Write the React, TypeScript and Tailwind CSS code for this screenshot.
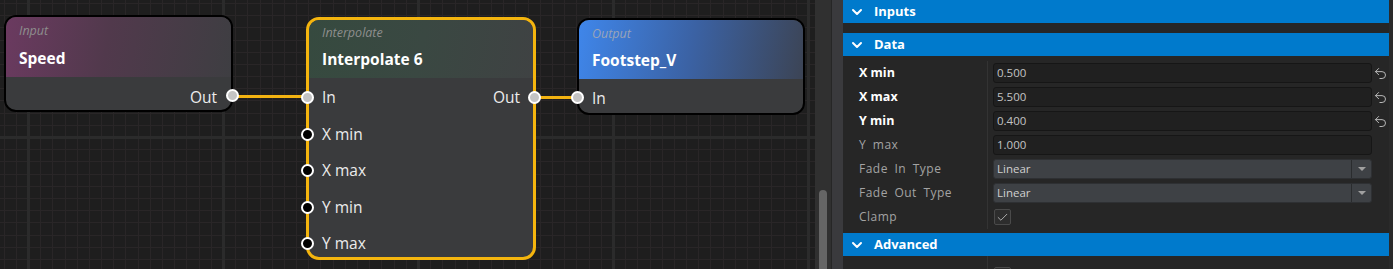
import React from 'react';
import { ChevronDown, Undo2, Check } from 'lucide-react';

const W = 815;
const H = 269;
const minor = 195 / 16;

function Grid() {
  const vx: number[] = [];
  for (let x = 3.6; x < W; x += minor) vx.push(Math.round(x));
  const hy: number[] = [];
  for (let y = 137 - minor * 11; y < H; y += minor) hy.push(Math.round(y));
  return (
    <svg className="absolute inset-0" width={W} height={H} shapeRendering="crispEdges">
      {vx.map((x) => (
        <rect key={'v' + x} x={x} y={0} width={1} height={H} fill="#292627" />
      ))}
      {hy.map((y) => (
        <rect key={'h' + y} x={0} y={y} width={W} height={1} fill="#292627" />
      ))}
      {[27, 222, 417, 612, 807].map((x) => (
        <rect key={'V' + x} x={x} y={0} width={3} height={H} fill="#2b2b2b" />
      ))}
      <rect x={0} y={136} width={W} height={3} fill="#2b2b2b" />
      <line x1={233} y1={96} x2={307} y2={97} stroke="#f2b311" strokeWidth={3} />
      <line x1={535} y1={97} x2={576} y2={98} stroke="#f2b311" strokeWidth={3} />
    </svg>
  );
}

function Port({ side, filled, top }: { side: 'l' | 'r'; filled: boolean; top: number }) {
  return (
    <span
      className={
        'absolute w-[13px] h-[13px] rounded-full border-2 border-white ' +
        (filled ? 'bg-[#c4c4c4] ' : 'bg-black ') +
        (side === 'l' ? '-left-[8px]' : '-right-[8px]')
      }
      style={{ top }}
    />
  );
}

function App() {
  const rows = [
    { label: 'X min', bold: true, value: '0.500', kind: 'input', reset: true },
    { label: 'X max', bold: true, value: '5.500', kind: 'input', reset: true },
    { label: 'Y min', bold: true, value: '0.400', kind: 'input', reset: true },
    { label: 'Y max', bold: false, value: '1.000', kind: 'input', reset: false },
    { label: 'Fade In Type', bold: false, value: 'Linear', kind: 'select', reset: false },
    { label: 'Fade Out Type', bold: false, value: 'Linear', kind: 'select', reset: false },
    { label: 'Clamp', bold: false, value: '', kind: 'check', reset: false },
  ];

  return (
    <div className="flex w-[1393px] h-[269px] overflow-hidden bg-[#1e1e1e] font-['Open_Sans',sans-serif]">
      {/* Canvas */}
      <div className="relative w-[815px] h-full shrink-0 bg-[#1e1e1e] overflow-hidden">
        <Grid />

        {/* Speed node */}
        <div className="absolute left-[4px] top-[15px] w-[229px] h-[97px] rounded-[12px] border-2 border-black bg-[#3a3b3d] flex flex-col">
          <div className="shrink-0 h-[60px] rounded-t-[10px] bg-[linear-gradient(100deg,#6b3a60_0%,#51394c_45%,#3e3e42_100%)] px-[13px] pt-[6px] flex flex-col">
            <span className="text-[12.5px] leading-[16px] italic text-[#8e8e8e]">Input</span>
            <span className="mt-[9px] text-[15.5px] leading-[20px] font-bold text-white">Speed</span>
          </div>
          <div className="relative flex-1 flex items-start justify-end pr-[14px] pt-[10px]">
            <span className="text-[15.5px] leading-[20px] text-[#ececec]">Out</span>
            <Port side="r" filled top={12} />
          </div>
        </div>

        {/* Interpolate node */}
        <div className="absolute left-[306px] top-[17px] w-[230px] h-[243px] rounded-[13px] border-[3px] border-[#f4b50e] bg-[#3a3b3d] flex flex-col">
          <div className="shrink-0 h-[58px] rounded-t-[10px] bg-[linear-gradient(100deg,#364a3f_0%,#3a4842_50%,#3f4243_100%)] px-[13px] pt-[5px] flex flex-col">
            <span className="text-[12.5px] leading-[16px] italic text-[#8e8e8e]">Interpolate</span>
            <span className="mt-[8px] text-[15.5px] leading-[20px] font-bold text-white">Interpolate 6</span>
          </div>
          <div className="relative flex-1 flex flex-col pt-[1px]">
            {['In', 'X min', 'X max', 'Y min', 'Y max'].map((p, i) => (
              <div key={p} className="relative shrink-0 h-[36.5px] flex items-center justify-between pl-[13px] pr-[13px]">
                <span className="text-[15.5px] leading-[20px] text-[#ececec]">{p}</span>
                {i === 0 && <span className="text-[15.5px] leading-[20px] text-[#ececec]">Out</span>}
                <Port side="l" filled={i === 0} top={12} />
                {i === 0 && <Port side="r" filled top={12} />}
              </div>
            ))}
          </div>
        </div>

        {/* Output node */}
        <div className="absolute left-[577px] top-[18px] w-[228px] h-[97px] rounded-[12px] border-2 border-black bg-[#3a3b3d] flex flex-col">
          <div className="shrink-0 h-[59px] rounded-t-[10px] bg-[linear-gradient(100deg,#3f86ea_0%,#3b62a4_50%,#3c4455_100%)] px-[13px] pt-[6px] flex flex-col">
            <span className="text-[12.5px] leading-[16px] italic text-[#9aa4b8]">Output</span>
            <span className="mt-[8px] text-[15.5px] leading-[20px] font-bold text-white">Footstep_V</span>
          </div>
          <div className="relative flex-1 flex items-start pl-[13px] pt-[9px]">
            <span className="text-[15.5px] leading-[20px] text-[#ececec]">In</span>
            <Port side="l" filled top={12} />
          </div>
        </div>
      </div>

      {/* Scrollbar */}
      <div className="shrink-0 w-[16px] h-full bg-[#303030] flex flex-col justify-end items-center">
        <div className="w-[8px] h-[79px] rounded-t-full bg-[#656565]" />
      </div>
      <div className="shrink-0 w-[12px] h-full bg-[#3a3a3d] border-l border-[#262626]" />

      {/* Inspector */}
      <div className="shrink-0 w-[546px] h-full bg-[#262626] flex flex-col text-[12px]">
        <Header title="Inputs" />
        <div className="shrink-0 h-[10px]" />
        <Header title="Data" />
        <div className="shrink-0 flex flex-col pt-[5px]">
          {rows.map((r) => (
            <div key={r.label} className="shrink-0 flex h-[24px] items-center">
              <div
                className={
                  'w-[144px] pl-[16px] ' +
                  (r.bold ? 'font-bold text-white text-[12.5px]' : 'text-[#a3a3a3] tracking-[0.04em] [word-spacing:3px]')
                }
              >
                {r.label}
              </div>
              <div className="h-full w-px bg-[#333333]" />
              <div className="w-[384px] pl-[5px] flex items-center">
                {r.kind === 'input' && (
                  <div className="w-[379px] h-[20px] rounded-[3px] bg-[#202020] border border-[#161616] pl-[3px] flex items-center text-[11.5px] text-[#c4c4c4]">
                    {r.value}
                  </div>
                )}
                {r.kind === 'select' && (
                  <div className="w-[379px] h-[20px] rounded-[3px] bg-[#3e4145] border border-[#2e3033] flex items-center text-[11.5px] text-[#d0d0d0]">
                    <span className="flex-1 pl-[3px]">{r.value}</span>
                    <span className="w-[20px] h-full border-l border-[#2a2c2e] flex items-center justify-center">
                      <span className="w-0 h-0 border-l-[4px] border-r-[4px] border-t-[4px] border-l-transparent border-r-transparent border-t-[#a0a0a0]" />
                    </span>
                  </div>
                )}
                {r.kind === 'check' && (
                  <div className="w-[17px] h-[16px] ml-[1px] rounded-[2px] bg-[#2d2d2d] border border-[#4a4a4a] flex items-center justify-center">
                    <Check size={13} strokeWidth={1.6} color="#bdbdbd" />
                  </div>
                )}
              </div>
              <div className="w-[17px] flex items-center justify-center">
                {r.reset && <Undo2 size={15} strokeWidth={1.6} color="#b8b8b8" />}
              </div>
            </div>
          ))}
        </div>
        <div className="shrink-0 h-[4px]" />
        <Header title="Advanced" />
        <div className="shrink-0 flex h-[24px] items-center">
          <div className="w-[144px]" />
          <div className="h-full w-px bg-[#333333]" />
          <div className="pl-[6px] pt-[14px]">
            <div className="w-[17px] h-[16px] rounded-[2px] bg-[#2d2d2d] border border-[#4a4a4a]" />
          </div>
        </div>
      </div>
      <div className="flex-1 h-full bg-[#2a2a2a]" />
    </div>
  );
}

function Header({ title }: { title: string }) {
  return (
    <div className="shrink-0 h-[23px] bg-[#007acc] flex items-center pl-[6px] text-white">
      <ChevronDown size={16} strokeWidth={3} className="text-white" />
      <span className="ml-[9px] text-[13px] font-bold">{title}</span>
    </div>
  );
}

export default App;
